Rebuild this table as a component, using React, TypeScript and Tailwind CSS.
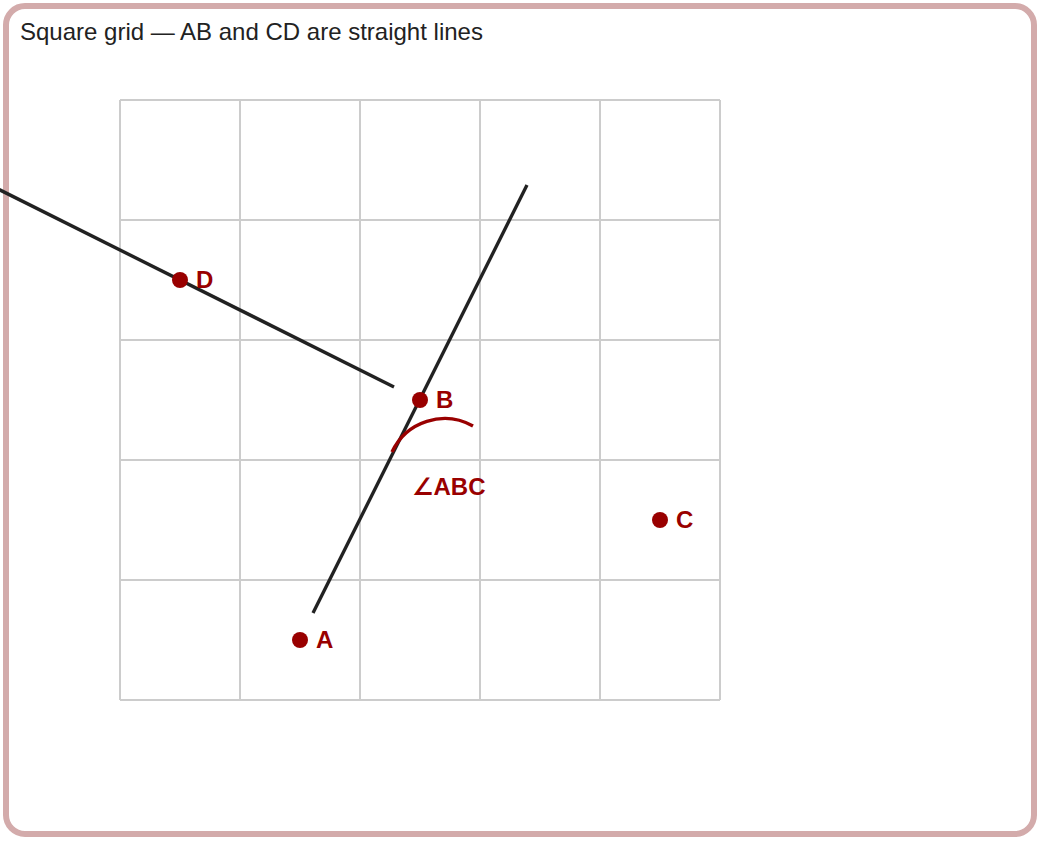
import * as React from "react";

const RED = "#990000";

const points = [
  { name: "D", x: 180, y: 280 },
  { name: "B", x: 420, y: 400 },
  { name: "C", x: 660, y: 520 },
  { name: "A", x: 300, y: 640 },
];

function GridFigure() {
  const ticks = [120, 240, 360, 480, 600, 720];

  // svg sits at page (20, 46); the viewBox keeps page coordinates
  return (
    <svg
      width={1000}
      height={770}
      viewBox="20 46 1000 770"
      className="block overflow-visible"
      style={{ overflow: "visible" }}
    >
      {ticks.map((t) => (
        <line key={"v" + t} x1={t} y1={100} x2={t} y2={700} stroke="#cccccc" strokeWidth={2} />
      ))}
      {ticks.map((t) => (
        <line key={"h" + t} x1={120} y1={t - 20} x2={720} y2={t - 20} stroke="#cccccc" strokeWidth={2} />
      ))}

      {/* line through D, stops just short of B */}
      <line x1={-20} y1={180} x2={394} y2={387} stroke="#222222" strokeWidth={3.4} />
      {/* line through A and B */}
      <line x1={313} y1={613} x2={527} y2={185} stroke="#222222" strokeWidth={3.4} />

      {/* angle arc */}
      <path d="M392 452 A58 58 0 0 1 473 426" fill="none" stroke={RED} strokeWidth={3.4} />
      <text
        x={412}
        y={495}
        fill={RED}
        fontSize={24}
        fontWeight={700}
        fontFamily='"Liberation Sans", Arial, "DejaVu Sans", sans-serif'
      >
        ∠ABC
      </text>

      {points.map((p) => (
        <g key={p.name}>
          <circle cx={p.x} cy={p.y} r={8} fill={RED} />
          <text
            x={p.x + 16}
            y={p.y + 8}
            fill={RED}
            fontSize={24}
            fontWeight={700}
            fontFamily='"Liberation Sans", Arial, sans-serif'
          >
            {p.name}
          </text>
        </g>
      ))}
    </svg>
  );
}

export default function App() {
  return (
    <div className="w-[1045px] h-[845px] bg-white font-['Liberation_Sans',Arial,sans-serif]">
      <div className="m-[3px] w-[1034px] h-[834px] border-[6px] border-[#d3abab] rounded-[22px] pt-[9px] px-[11px] overflow-visible">
        <div className="text-[24px] leading-[28px] text-[#222222]">
          Square grid — AB and CD are straight lines
        </div>
        <GridFigure />
      </div>
    </div>
  );
}
